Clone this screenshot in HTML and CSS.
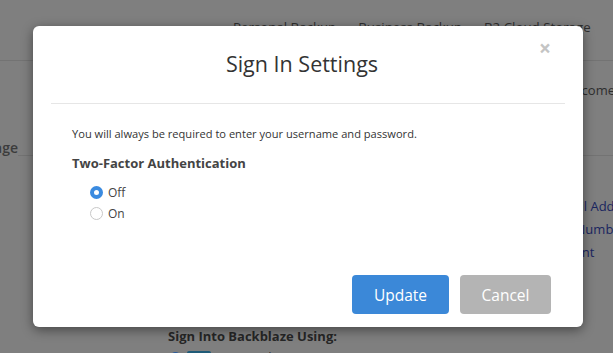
FILE: index.html
```html
<!DOCTYPE html>
<html>
<head>
<meta charset="utf-8">
<link rel="stylesheet" href="styles.css">
</head>
<body>
<div class="page">
  <header class="topbar">
    <nav class="nav">
      <span class="nav-item">Personal Backup</span>
      <span class="nav-item">Business Backup</span>
      <span class="nav-item">B2 Cloud Storage</span>
      <span class="nav-item">Blog</span>
    </nav>
  </header>
  <div class="main">
    <aside class="sidebar"><span class="side-label">My Storage</span></aside>
    <section class="content">
      <div class="welcome">Welcome</div>
      <div class="account-links">
        <div class="acc-link">Email Address</div>
        <div class="acc-link">My Number</div>
        <div class="acc-link">Parent</div>
      </div>
    </section>
  </div>
  <div class="signin">
    <div class="signin-title">Sign Into Backblaze Using:</div>
    <div class="signin-row"><span class="dot"></span><span class="chip"></span><span class="signin-text">My Email</span></div>
  </div>

  <div class="overlay">
    <div class="modal">
      <div class="modal-header">
        <h1 class="modal-title">Sign In Settings</h1>
        <span class="close">&times;</span>
      </div>
      <div class="modal-body">
        <p class="note">You will always be required to enter your username and password.</p>
        <h2 class="subhead">Two-Factor Authentication</h2>
        <label class="opt"><input type="radio" name="tfa" checked><span>Off</span></label>
        <label class="opt"><input type="radio" name="tfa"><span>On</span></label>
      </div>
      <div class="modal-footer">
        <button class="btn btn-primary">Update</button>
        <button class="btn btn-cancel">Cancel</button>
      </div>
    </div>
  </div>
</div>
</body>
</html>
```
FILE: styles.css
```css
* { box-sizing: border-box; }
html, body { margin: 0; padding: 0; }
body {
  width: 613px;
  height: 353px;
  overflow: hidden;
  background: #7f7f7f;
  font-family: "Open Sans", "Liberation Sans", sans-serif;
}
.page {
  position: relative;
  width: 613px;
  height: 353px;
  overflow: hidden;
}
.topbar {
  height: 61px;
  border-bottom: 1px solid #737373;
}
.nav {
  display: flex;
  gap: 22px;
  padding: 18px 0 0 233px;
  white-space: nowrap;
}
.nav-item {
  font-size: 13.3px;
  color: #2e2e2e;
}
.main {
  display: flex;
  height: 255px;
}
.sidebar {
  width: 18px;
  flex: none;
  overflow: hidden;
  display: flex;
  justify-content: flex-end;
  white-space: nowrap;
  padding-top: 77px;
}
.side-label {
  font-size: 14px;
  font-weight: 600;
  color: #3c3c3c;
}
.content {
  flex: 1;
  min-width: 0;
  display: flex;
  flex-direction: column;
  align-items: flex-end;
}
.welcome {
  margin-top: 20px;
  font-size: 13px;
  color: #2e2e2e;
  white-space: nowrap;
  margin-right: -2px;
}
.account-links {
  margin-top: 56px;
  border-top: 1px solid #737373;
  padding-top: 41px;
  width: 100%;
  display: flex;
  flex-direction: column;
  align-items: flex-start;
  padding-left: 536px;
  gap: 5px;
}
.acc-link {
  font-size: 13px;
  line-height: 18px;
  color: #1a2560;
  white-space: nowrap;
}
.signin {
  position: absolute;
  left: 168px;
  top: 327px;
}
.signin-title {
  font-size: 13px;
  line-height: 18px;
  font-weight: 700;
  color: #262626;
}
.signin-row {
  display: flex;
  align-items: center;
  gap: 6px;
  margin-top: 3px;
  padding-left: 2px;
}
.dot { width: 11px; height: 11px; border-radius: 50%; background: #2a5c9c; }
.chip { width: 24px; height: 12px; border-radius: 2px; background: #1f5b78; }
.signin-text { font-size: 13px; color: #2e2e2e; }

.overlay {
  position: absolute;
  inset: 0;
}
.modal {
  position: absolute;
  left: 33px;
  top: 26px;
  width: 550px;
  height: 301px;
  background: #fff;
  border-radius: 6px;
  box-shadow: 0 3px 12px rgba(0,0,0,0.45);
  display: flex;
  flex-direction: column;
}
.modal-header {
  position: relative;
  margin: 0 18px;
  height: 78px;
  border-bottom: 1px solid #e6e6e6;
  padding: 24px 12px 0 0;
}
.modal-title {
  margin: 0;
  text-align: center;
  font-size: 21.5px;
  line-height: 28px;
  font-weight: 400;
  color: #333;
}
.close {
  position: absolute;
  right: 14px;
  top: 12px;
  font-size: 21px;
  line-height: 21px;
  font-weight: 700;
  color: #c4c4c4;
}
.modal-body {
  padding: 20px 39px 0;
  flex: 1;
}
.note {
  margin: 0;
  font-size: 11.1px;
  line-height: 20px;
  color: #333;
}
.subhead {
  margin: 9px 0 9px;
  font-size: 13px;
  line-height: 20px;
  font-weight: 700;
  color: #444;
}
.opt {
  display: flex;
  align-items: center;
  gap: 5px;
  margin-left: 18px;
  height: 21px;
  font-size: 12px;
  color: #444;
}
.opt input {
  appearance: none;
  -webkit-appearance: none;
  margin: 0;
  width: 13px;
  height: 13px;
  border-radius: 50%;
  border: 1px solid #c8c8c8;
  background: #fff;
}
.opt input:checked {
  border: 4.5px solid #3b8be0;
  background: #fff;
}
.modal-footer {
  display: flex;
  justify-content: flex-end;
  gap: 11px;
  padding: 0 32px 13px;
}
.btn {
  height: 39px;
  border: none;
  border-radius: 4px;
  font-family: "Open Sans", "Liberation Sans", sans-serif;
  font-size: 15.5px;
  color: #fff;
  padding: 0;
}
.btn-primary { width: 97px; background: #3b88d8; }
.btn-cancel { width: 91px; background: #b4b4b4; }
```
